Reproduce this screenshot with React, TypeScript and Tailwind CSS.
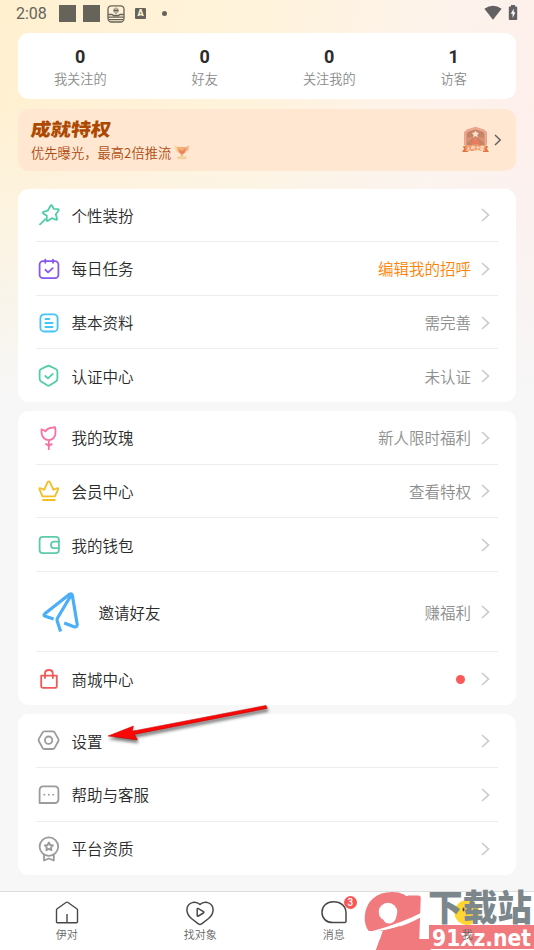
import type { ReactNode } from "react";

type RowProps = {
  icon: ReactNode;
  label: string;
  value?: string;
  accent?: boolean;
  dot?: boolean;
  tall?: boolean;
};

function Icon({ color, children }: { color: string; children: ReactNode }) {
  return (
    <svg
      className="mt-px h-[26px] w-[26px] shrink-0 overflow-visible"
      viewBox="0 0 26 26"
      fill="none"
      stroke={color}
      strokeWidth="1.8"
      strokeLinecap="round"
      strokeLinejoin="round"
    >
      {children}
    </svg>
  );
}

function Chevron() {
  return (
    <svg
      className="ml-[10px] mr-[8px] mt-px h-[14px] w-[9px] shrink-0"
      viewBox="0 0 9 14"
      fill="none"
      stroke="#cbcbcb"
      strokeWidth="1.7"
    >
      <path d="M1 1 7.5 7 1 13" />
    </svg>
  );
}

function Row({ icon, label, value, accent, dot, tall }: RowProps) {
  return (
    <div
      className={`flex items-center border-b border-[#ededed] last:h-[53px] last:border-b-0 ${
        tall ? "h-[80.4px]" : "h-[53.65px]"
      }`}
    >
      {icon}
      <span className="ml-[9.5px] flex-1 text-[15.5px] leading-6 text-[#2a2a2a]">{label}</span>
      {value && (
        <span className={`text-[15.5px] leading-6 ${accent ? "text-[#ff8205]" : "text-[#8e8e8e]"}`}>
          {value}
        </span>
      )}
      {dot && <span className="mr-[6px] mt-px h-[9px] w-[9px] rounded-full bg-[#fa5a5a]" />}
      <Chevron />
    </div>
  );
}

function Card({ children, className }: { children: ReactNode; className: string }) {
  return (
    <section className={`mx-[18px] rounded-[11px] bg-white px-[18px] font-[350] ${className}`}>{children}</section>
  );
}

function StatusBar() {
  return (
    <header className="flex h-[33px] items-start pl-4 pr-4 pt-[5px] text-[#66635a]">
      <span className="w-[42.5px] font-[Roboto] text-[16px] leading-[18px]">2:08</span>
      <span className="h-[17px] w-[17px] bg-[#66635a]" />
      <span className="ml-[7.5px] h-[17px] w-[17px] bg-[#66635a]" />
      <svg
        className="ml-[7px] h-[18px] w-[18px]"
        viewBox="0 0 18 18"
        fill="none"
        stroke="currentColor"
        strokeWidth="1.3"
      >
        <rect x="1" y=".8" width="16" height="16.2" rx="3.5" />
        <path d="M1 9.5h4l1.5 1h5l1.5-1h4M1 12.2h16M2 14.6h14" />
        <path d="M7.2 3.5v4M9 2.5v6.5M10.8 3.5v4M6.5 5.5h5" strokeWidth="1" />
      </svg>
      <span className="ml-[10px] mt-[3px] h-[11px] w-[11px] rounded-[1px] bg-[#66635a] text-center font-[Roboto] text-[9px] font-black leading-[11px] text-[#fff3da]">
        A
      </span>
      <span className="ml-[16px] mt-[6px] h-[5px] w-[5px] rounded-full bg-[#66635a]" />
      <svg className="ml-auto h-[15px] w-[18px]" viewBox="0 0 18 15" fill="#626060">
        <path d="M.4 3.8Q9-2.1 17.6 3.8L9 14.8Z" />
      </svg>
      <svg className="ml-[6px] h-[15px] w-[10px]" viewBox="0 0 10 15">
        <path d="M3 0h4v1.6h1.4q.8 0 .8.8v11.8q0 .8-.8.8H1.6q-.8 0-.8-.8V2.4q0-.8.8-.8H3Z" fill="#626060" />
        <path d="M5.8 3.4 2.8 8.7h1.8v4.2l2.8-5.6H5.6Z" fill="#fff" />
      </svg>
    </header>
  );
}

const stats = [
  ["0", "我关注的"],
  ["0", "好友"],
  ["0", "关注我的"],
  ["1", "访客"],
];

function Trophy() {
  return (
    <svg className="ml-[3px] h-[15px] w-[16px]" viewBox="0 0 16 15">
      <path d="M.5.5 5 2 6 8 2 6Z" fill="#ffd09a" />
      <path d="M15 .5 11 2.5 10 8 14.5 5Z" fill="#f6b48e" />
      <path d="M3 2h10L11.5 7.5 8.8 9.5v2.2H7V9.5L4 7Z" fill="#f5ae79" />
      <path d="m5 4 3 2 4-3-1.6 5-2.4 1.5-2.5-2Z" fill="#ea8358" />
      <ellipse cx="8" cy="12.7" rx="5" ry="1.6" fill="#f3d09a" />
    </svg>
  );
}

function Medal() {
  return (
    <svg className="h-[27px] w-[27px]" viewBox="0 0 27 27">
      <path d="M1 20h5v6H0l2-3ZM26 20h-5v6h6l-2-3Z" fill="#df7540" />
      <path d="M13.5.7 22 3.5 25 6v13H2V6l3-2.5Z" fill="#eba38b" />
      <path d="M13.5 2.8 20.5 5 23 7.5V20H4V7.5L6.5 5Z" fill="#c48467" stroke="#f4b09a" />
      <path d="m13.5 10-9 2v5Zm0 0 9 2v5Zm0 0-4 10h8Z" fill="#dd9173" />
      <path d="m13.5 4.4 1.2 2.1 2.4.4-1.7 1.8.3 2.5-2.2-1.1-2.2 1.1.3-2.5-1.7-1.8 2.4-.4Z" fill="#ffe3cc" />
      <path d="M10.5 18v-3l3-2 3 2v3Z" fill="#f27958" />
      <path d="M3 19h21l-1 6H4Z" fill="#f29a6b" />
      <text x="13.5" y="23.7" textAnchor="middle" fontSize="4.6" fontWeight="700" fill="#fff1df">
        人气之星
      </text>
    </svg>
  );
}

function NavItem({ label, children }: { label: string; children: ReactNode }) {
  return (
    <div className="flex flex-1 flex-col items-center pt-[8px]">
      <div className="relative h-[26px] w-[30px]">{children}</div>
      <span className="relative z-10 text-[11px] font-[350] leading-4 text-[#666]">{label}</span>
    </div>
  );
}

const navSvg = "h-[26px] w-[30px] fill-none stroke-[#484848]";

function Watermark() {
  return (
    <svg className="absolute bottom-0 right-0 h-[70px] w-[184px]" viewBox="350 880 184 70" aria-hidden="true">
      <g
        fill="#f07a7d"
        stroke="#f07a7d"
        strokeLinejoin="round"
        fontFamily="Liberation Sans"
        fontWeight="700"
      >
        <text transform="translate(360 956) skewX(-6) scale(1.06 1)" x="0" y="0" fontSize="88" strokeWidth="5">
          9
        </text>
        <text transform="translate(393 949) skewX(-2)" x="-4" y="0" fontSize="74" strokeWidth="5">
          1
        </text>
      </g>
      <circle cx="388" cy="912" r="9.3" fill="#fff" />
      <path d="M371 931.5Q400 924 427 910V913.5Q402 930 371 931.5Z" fill="#fff" />
      <path d="M352 931H383L376 950H352Z" fill="#fff" />
      <path d="M383 931 400 926 392 950H376Z" fill="#f07a7d" />
      <text
        x="428"
        y="921"
        fontSize="36.5"
        fontWeight="800"
        fill="#7c878c"
        textLength="104"
        lengthAdjust="spacingAndGlyphs"
      >
        下载站
      </text>
      <path d="M429 925h105v24H429Z" fill="#f07a7d" />
      <text
        x="432"
        y="945.5"
        fontFamily="DejaVu Sans Condensed, DejaVu Sans"
        fontSize="23"
        fontWeight="700"
        fill="#fff"
        textLength="99"
        lengthAdjust="spacingAndGlyphs"
      >
        91xz.net
      </text>
    </svg>
  );
}

export default function App() {
  return (
    <main className="relative flex h-[950px] w-[534px] flex-col overflow-hidden bg-[#f7f7f7] bg-[linear-gradient(to_bottom,transparent_0px,transparent_100px,#f7f7f7_400px),linear-gradient(100deg,#fff0d0_0%,#fff3dc_38%,#fdf3ec_65%,#ffe9ea_100%)] font-['Noto_Sans_CJK_SC',sans-serif]">
      <StatusBar />

      <section className="mx-[18px] flex h-[66px] rounded-[11px] bg-white">
        {stats.map(([count, label]) => (
          <div key={label} className="flex flex-1 flex-col items-center pt-[13px]">
            <b className="font-[Roboto] text-[18px] font-bold leading-[21px] text-[#2c2c2c]">{count}</b>
            <span className="mt-[2px] text-[13.2px] font-[350] leading-5 text-[#8b8b8b]">{label}</span>
          </div>
        ))}
      </section>

      <section className="mx-[18px] mt-[9.5px] flex h-[62px] items-center rounded-[11px] bg-[#ffe7d2] pl-[13px] pr-[14px]">
        <div className="flex-1">
          <h2 className="-skew-x-6 scale-y-90 text-[20px] font-extrabold leading-6 text-[#ad4800]">成就特权</h2>
          <p className="mt-[2px] flex items-center text-[13.3px] font-[350] leading-5 text-[#b04c10]">
            优先曝光，最高2倍推流
            <Trophy />
          </p>
        </div>
        <Medal />
        <svg className="ml-[5px] h-[12px] w-[8px]" viewBox="0 0 8 12" fill="none" stroke="#626262" strokeWidth="1.5">
          <path d="M1 1 6.2 6 1 11" />
        </svg>
      </section>

      <Card className="mt-[18px]">
        <Row
          label="个性装扮"
          icon={
            <Icon color="#51cda9">
              <path d="M14.7 3.5q.8-1 1.4.2l1.6 3.1 4.1.3q1.6.2.6 1.6l-2.6 3.5 1.2 4.4q.3 1.6-1.2 1l-4-1.4-3.7 2.6q-1.4.8-1.4-.8l.1-4.2-3.5-2.4q-1.2-1 .2-1.5l4.2-1.2ZM9.2 17.3 4 22.3" />
            </Icon>
          }
        />
        <Row
          label="每日任务"
          value="编辑我的招呼"
          accent
          icon={
            <Icon color="#8657ef">
              <rect x="3.6" y="5.2" width="18.8" height="16.9" rx="3.4" />
              <path d="M9.3 3.6v3.2M17 3.6v3.2M9.4 13.8l2.7 2.6 4.6-4.2" />
            </Icon>
          }
        />
        <Row
          label="基本资料"
          value="需完善"
          icon={
            <Icon color="#44c4f7">
              <rect x="4.4" y="4.3" width="17.2" height="17.2" rx="3.8" />
              <path d="M9.4 9h3.8M9.4 13h7.2M9.4 17h7.2" />
            </Icon>
          }
        />
        <Row
          label="认证中心"
          value="未认证"
          icon={
            <Icon color="#51cda9">
              <path d="M11.2 3.1q1.3-.7 2.6 0l6 2.9q1.6.8 1.6 2.5v7q0 1.8-1.6 2.9l-6 3.9q-1.3.8-2.6 0l-6-3.9q-1.6-1.1-1.6-2.9v-7Q3.6 6.8 5.2 6ZM9.3 13l2.7 2.4 4.7-4.5" />
            </Icon>
          }
        />
      </Card>

      <Card className="mt-[8.5px]">
        <Row
          label="我的玫瑰"
          value="新人限时福利"
          icon={
            <Icon color="#fa6fa2">
              <path d="M5.5 4.3q2.2.1 4 2.1 1.2-2.7 4.6-3.4 2.7-.2 4.8-1 1.2 3.7.3 8-1.3 4.4-6.3 5.2-5.8-.6-7.1-6-.4-2.6-.3-4.9ZM12.8 15.2v9M10 19l2.8 1.8 3-1.7" />
            </Icon>
          }
        />
        <Row
          label="会员中心"
          value="查看特权"
          icon={
            <Icon color="#f6bd22">
              <path d="M6.5 18.3h12.4l3.2-7q.5-1.6-1.2-1l-3.4 1.5-3.6-7.7q-1.1-1.6-2.2 0l-3.6 7.7-3.4-1.5q-1.7-.6-1.2 1ZM7 22h11.8" />
            </Icon>
          }
        />
        <Row
          label="我的钱包"
          icon={
            <Icon color="#5ccbac">
              <rect x="3.6" y="4.8" width="19.3" height="16.3" rx="3.2" />
              <path d="M22.8 9.6h-4.3q-3.5 0-3.5 3.3t3.5 3.3h4.3" />
            </Icon>
          }
        />
        <Row
          tall
          label="邀请好友"
          value="赚福利"
          icon={
            <svg
              className="mt-px h-[53px] w-[53px] shrink-0"
              viewBox="0 0 53 53"
              fill="none"
              stroke="#4baef8"
              strokeWidth="3.2"
              strokeLinejoin="round"
              strokeLinecap="butt"
            >
              <path d="m17.6 33-8.3-2.7q-2.4-1.1-.2-2.9L33.2 8.5q2.7-1.6 3.2 1.2l4.8 28.5q.2 3.5-3.2 2.6l-9.8-3.7M34.6 10 21.4 32.2q-.7 1.3-.2 2.8l3.4 10.6" />
            </svg>
          }
        />
        <Row
          label="商城中心"
          dot
          icon={
            <Icon color="#f15959">
              <path d="M5.2 9.6h15.6v10.3q0 1.9-1.9 1.9H7.1q-1.9 0-1.9-1.9ZM9 12V7.4q0-3.4 3.9-3.4t3.9 3.4V12" />
            </Icon>
          }
        />
      </Card>

      <Card className="mt-[9px]">
        <Row
          label="设置"
          icon={
            <Icon color="#9b9b9b">
              <path d="M8.4 3.3h8.4q1.2 0 1.8 1.1l3.7 6.5q.6 1.2 0 2.4l-3.7 6.6q-.6 1.1-1.8 1.1H8.4q-1.2 0-1.8-1.1l-3.7-6.6q-.6-1.2 0-2.4l3.7-6.5q.6-1.1 1.8-1.1Z" />
              <circle cx="12.6" cy="12.2" r="3.7" />
            </Icon>
          }
        />
        <Row
          label="帮助与客服"
          icon={
            <Icon color="#9b9b9b">
              <path d="M3.6 21V8.2q0-3.8 3.8-3.8h11.2q3.8 0 3.8 3.8v9q0 3.8-3.8 3.8Z" />
              <path d="M8.3 12.7h.1M12.8 12.7h.1M17.2 12.7h.1" />
            </Icon>
          }
        />
        <Row
          label="平台资质"
          icon={
            <Icon color="#9b9b9b">
              <circle cx="12.9" cy="10.6" r="9.3" />
              <path d="m12.9 6.5 1.3 2.5 2.8.4-2 2 .5 2.8-2.6-1.3-2.6 1.3.5-2.8-2-2 2.8-.4ZM8 19.5v5l4.9-2 4.9 2v-5" />
            </Icon>
          }
        />
      </Card>

      <nav className="mt-auto flex h-[59px] border-t border-[#dcdcdc] bg-white">
        <NavItem label="伊对">
          <svg className={navSvg} viewBox="0 0 30 26" strokeWidth="1.4" strokeLinejoin="round">
            <path d="M4.5 10.2q0-.9.7-1.4L14 2.5q1-.7 2 0l8.8 6.3q.7.5.7 1.4v11.6q0 1-1 1h-19q-1 0-1-1ZM15 14v8.5" />
          </svg>
        </NavItem>
        <NavItem label="找对象">
          <svg className={navSvg} viewBox="0 0 30 26" strokeWidth="1.5" strokeLinejoin="round">
            <path d="M15 4.5q-3-3-7.2-2.1Q1.9 4 1.9 10q0 4.5 4.5 8.5l7 5.4q1.6 1 3.2 0l7-5.4Q28.1 14.5 28.1 10q0-6-5.9-7.6Q18 1.5 15 4.5Z" />
            <path d="M12.2 9.3q0-1.3 1.2-.7l5 3q1 .7 0 1.4l-5 3q-1.2.6-1.2-.7Z" />
          </svg>
        </NavItem>
        <NavItem label="消息">
          <svg className={navSvg} viewBox="0 0 30 26" strokeWidth="1.5" strokeLinejoin="round">
            <path d="M14.5 1.8C22 1.8 27 6.3 27 13v8.3q0 1.3-1.3 1.3H13.7C7 22.6 3 18.2 3 12.2S7.5 1.8 14.5 1.8Z" />
          </svg>
          <span className="absolute -right-[8px] -top-[4px] h-[13px] w-[13px] rounded-full bg-[#fa5555] text-center font-[Roboto] text-[10px] font-medium leading-[13px] text-white">
            3
          </span>
        </NavItem>
        <NavItem label="我">
          <svg className="h-[26px] w-[30px]" viewBox="0 0 30 26">
            <circle cx="15" cy="12.5" r="12.5" fill="#ffd631" />
            <ellipse cx="11.5" cy="9.5" rx="1" ry="2" fill="#55461e" />
            <ellipse cx="18" cy="9.5" rx="1" ry="2" fill="#55461e" />
          </svg>
        </NavItem>
      </nav>

      <svg
        className="absolute left-[100px] top-[696px] h-[56px] w-[180px] drop-shadow-[1px_3px_1.5px_rgba(0,0,0,0.5)]"
        viewBox="100 696 180 56"
      >
        <path d="m108 736 25.5-10-1.4 5.2 134-25.8 1.2 3-132.8 26 3 5.5Z" fill="#fa0707" stroke="#b70000" strokeWidth=".5" />
      </svg>
      <Watermark />
    </main>
  );
}
